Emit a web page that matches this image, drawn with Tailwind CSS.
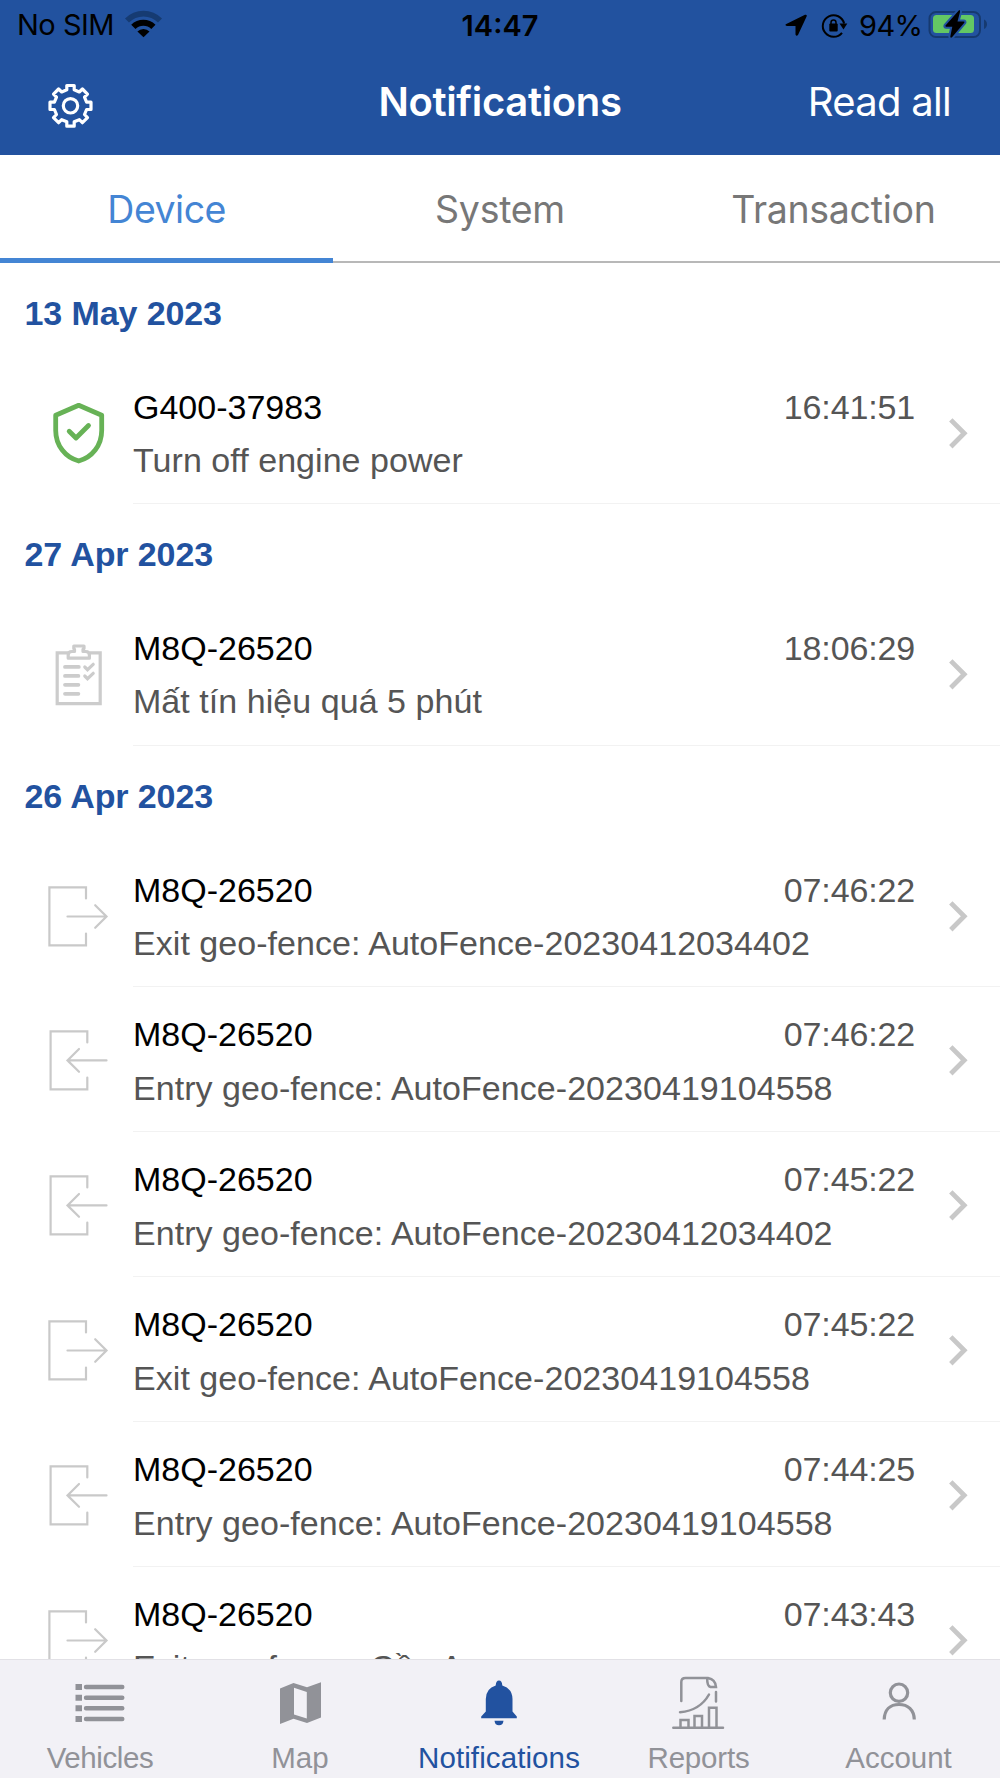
<!DOCTYPE html>
<html lang="en">
<head>
<meta charset="utf-8">
<title>Notifications</title>
<script src="https://cdn.jsdelivr.net/npm/@tailwindcss/browser@4"></script>
</head>
<body class="bg-white">
<svg class="hidden">
  <symbol id="shield" viewBox="0 0 133 145"><g fill="none" stroke="#67b256" stroke-width="4.8" stroke-linejoin="round"><path d="M78.7 45.3 101.7 55.3V70.5C101.7 85.5 92 97.5 78.7 101C65.400 97.5 55.700 85.5 55.700 70.5V55.3Z"/><path stroke-linecap="round" d="M69.200 71.200 76 78 88.500 65.500"/></g></symbol>
  <symbol id="clipboard" viewBox="0 0 133 145"><g fill="none" stroke="#ccc" stroke-width="3.200"><path d="M68 51.800H57.200V102.600H100.200V51.800H89.500"/><path stroke-linejoin="round" d="M68.200 57.200V54Q68.200 50.500 72 50.500H74.500V48.500L73.800 47.500V45H84V47.500L83 48.500V50.500H85.500Q89.400 50.500 89.400 54V57.200Z"/><path stroke-width="3.800" stroke-linecap="round" d="M65 65.900H78.800M65 74.900H78.400M65 83.800H78.400M65 92.800H78.400"/><path stroke-linecap="round" d="M84.800 66 87.500 68.700 93.200 63.300M84.800 75 87.500 77.700 93.200 72.300"/></g></symbol>
  <symbol id="exit" viewBox="0 0 133 145"><path fill="none" stroke="#c9c9c9" stroke-width="2.200" stroke-linecap="round" d="M86 55.500V44.300H49.400V102.300H86V90.500M67.500 73.500H106M95.200 62.200 106.500 73.500 95.200 84.800"/></symbol>
  <symbol id="entry" viewBox="0 0 133 145"><path fill="none" stroke="#c9c9c9" stroke-width="2.200" stroke-linecap="round" d="M87.300 55.500V44.400H50.600V102.300H87.300V90.500M67.500 73.400H106.500M79 62 67.500 73.400 79 84.800"/></symbol>
  <symbol id="chevron" viewBox="0 0 85 145"><path fill="none" stroke="#c8c8c8" stroke-width="4.800" d="M35.800 59.900 49.200 73.300 35.800 86.700"/></symbol>
</svg>
<div class="flex h-[1778px] w-[1000px] flex-col overflow-hidden bg-white font-['Liberation_Sans',Arial,sans-serif]">
  <header class="flex h-[155px] shrink-0 flex-col bg-[#22529f] font-[Inter,sans-serif]">
    <div class="grid h-[50px] grid-cols-3 items-center text-[29px] leading-[52px] text-black">
      <div class="flex h-[50px] items-center pl-[17px]">
        <span class="w-[108px] whitespace-nowrap tracking-[-0.5px]">No SIM</span>
        <svg width="37" height="50" viewBox="125 0 37 50"><path d="M125 18.500A26 26 0 0 1 162 18.500L158 22.500A20.500 20.500 0 0 0 129 22.500Z" fill="#163b72"/><path d="M131.200 24.700A17.300 17.300 0 0 1 155.500 24.700L151.300 28.900A11.500 11.500 0 0 0 135.500 28.900Z"/><path d="M137.400 31.500A8.500 8.500 0 0 1 149.500 31.500L143.500 37.300Z"/></svg>
      </div>
      <div class="-mt-px h-[50px] text-center font-semibold">14:47</div>
      <div class="flex h-[50px] justify-end">
        <svg width="65" height="50" viewBox="785 0 65 50"><path d="M785.800 24.300 805 14.800Q807.300 14.300 806.600 16.500L798 35Q796.300 36.800 795.500 34.500V25.900H787Q784.700 25.800 785.800 24.300Z"/><path d="M842 32.800A10.800 10.800 0 1 1 844.100 23.500" fill="none" stroke="#000" stroke-width="2"/><path d="M839.500 23.500H847.300L843.500 29.500Z"/><rect x="829.300" y="23.500" width="8.400" height="7.900" rx="1"/><path d="M831 24V22.500A2.500 2.500 0 0 1 836 22.500V24" fill="none" stroke="#000" stroke-width="1.500"/></svg>
        <span class="w-[78px] whitespace-nowrap pl-[9px] tracking-[-0.6px]">94%</span>
        <svg class="mr-[12px]" width="60" height="50" viewBox="928 0 60 50"><rect x="929.500" y="12" width="50.500" height="25" rx="6.500" fill="none" stroke="#163a70" stroke-width="2"/><path d="M984 19.500Q987 21 987 24.200T984 29Z" fill="#163a70"/><rect x="933" y="15" width="41" height="18" rx="3.500" fill="#63c764"/><path d="M959.200 10 945.500 25.600Q945 26.700 946.200 26.700H952.300L950.300 36.500Q950.500 38.500 952 37.300L964.300 22.700Q965 21.500 963.500 21.500H957.500L960 12Q960.300 10 959.200 10Z" fill="#000" stroke="#22529f" stroke-width="4" paint-order="stroke"/></svg>
      </div>
    </div>
    <div class="grid h-[104px] grid-cols-3 text-[40px] leading-[103px] text-white">
      <svg width="140" height="104" viewBox="0 50 140 104" fill="none" stroke="#fff" stroke-width="3.200"><circle cx="70.500" cy="105.800" r="7.200"/><path stroke-linejoin="round" d="M66.800 85.500H74.200V89.800L79.300 92L82.400 89L87.500 94.100L84.500 97.200L86.600 102.200H91V109.500H86.600L84.500 114.500L87.500 117.600L82.400 122.700L79.300 119.700L74.200 121.800V126.200H66.800V121.800L61.700 119.700L58.600 122.700L53.500 117.600L56.500 114.500L54.400 109.500H50V102.200H54.400L56.500 97.200L53.500 94.100L58.600 89L61.700 92L66.800 89.800Z"/></svg>
      <h1 class="-mx-5 text-center font-semibold tracking-[-0.35px]">Notifications</h1>
      <div class="pr-[49px] text-right tracking-[-0.7px]">Read all</div>
    </div>
  </header>
  <nav class="grid h-[108px] shrink-0 grid-cols-3 border-b-2 border-[#b8b8b8] text-center font-[Inter,sans-serif] text-[37.5px] leading-[110px] text-[#777]">
    <div class="h-[108px] border-b-[5px] border-[#4485d4] tracking-[-0.5px] text-[#4485d4]">Device</div>
    <div class="tracking-[-0.3px]">System</div>
    <div class="tracking-[-0.3px]">Transaction</div>
  </nav>
  <main id="list" class="min-h-0 flex-1 overflow-hidden"></main>
  <footer class="grid h-[119px] shrink-0 grid-cols-5 border-t border-[#e2e1e6] bg-[#f2f1f6] text-center text-[29.5px] leading-[36px] text-[#919298]">
    <div><svg class="block" width="200" height="80" viewBox="0 1660 200 80" fill="currentColor"><path d="M75.500 1684h6.500v6h-6.500zM75.500 1694.700h6.500v6h-6.500zM75.500 1705.300h6.500v6h-6.500zM75.500 1716h6.500v6h-6.500z"/><path stroke="currentColor" stroke-width="4.400" stroke-linecap="round" d="M86 1687H122.300M86 1697.700H122.300M86 1708.300H122.300M86 1719H122.300"/></svg><span class="tracking-[-0.4px]">Vehicles</span></div>
    <div><svg class="block" width="200" height="80" viewBox="200 1660 200 80" fill="currentColor"><path fill-rule="evenodd" d="M280 1688.500 293.500 1683 307 1687.300 321 1682.200V1717.500L307 1723 293.500 1718.800 280 1724ZM294 1687.800V1714.500L306.800 1718.500V1692Z"/></svg>Map</div>
    <div class="text-[#2252a0]"><svg class="block" width="200" height="80" viewBox="400 1660 200 80" fill="currentColor"><path d="M499 1680.500Q502 1680.500 502.300 1685.600Q512.300 1688.500 512.500 1699V1711.500L516.800 1716.500V1718.300H481.200V1716.500L485.800 1711.500V1699Q486 1688.500 495.700 1685.600Q496 1680.500 499 1680.500ZM494.500 1720.700H503.500Q503 1725.300 499 1725.300T494.500 1720.700Z"/></svg><span class="-ml-[2px] tracking-[0.1px]">Notifications</span></div>
    <div><svg class="block" width="200" height="80" viewBox="600 1660 200 80" fill="none" stroke="currentColor" stroke-width="2.500" stroke-linecap="round"><path d="M681.300 1701V1682Q681.300 1678 685.500 1678H708Q715.500 1679.500 716 1687H710.500Q707 1686 707.200 1678.500M716 1692V1701.500M680 1712.200Q700 1710.500 709 1694.500M673.300 1727.800H723M680.500 1727V1720H688.500V1727M694.500 1727V1716H702V1727M709 1727V1707.800H716.500V1727"/></svg><span class="-ml-[3px] tracking-[-0.2px]">Reports</span></div>
    <div><svg class="block" width="200" height="80" viewBox="800 1660 200 80" fill="none" stroke="currentColor" stroke-width="3.200"><circle cx="899" cy="1692.700" r="8.700"/><path d="M884.200 1719.500C884.500 1710 890 1704.500 899 1704.500S914 1710 914.300 1719.500"/></svg><span class="-ml-[3px]">Account</span></div>
  </footer>
</div>
<script>
const groups = [
  ["13 May 2023", [["shield", "G400-37983", "16:41:51", "Turn off engine power"]]],
  ["27 Apr 2023", [["clipboard", "M8Q-26520", "18:06:29", "Mất tín hiệu quá 5 phút"]]],
  ["26 Apr 2023", [
    ["exit", "M8Q-26520", "07:46:22", "Exit geo-fence: AutoFence-20230412034402"],
    ["entry", "M8Q-26520", "07:46:22", "Entry geo-fence: AutoFence-20230419104558"],
    ["entry", "M8Q-26520", "07:45:22", "Entry geo-fence: AutoFence-20230412034402"],
    ["exit", "M8Q-26520", "07:45:22", "Exit geo-fence: AutoFence-20230419104558"],
    ["entry", "M8Q-26520", "07:44:25", "Entry geo-fence: AutoFence-20230419104558"],
    ["exit", "M8Q-26520", "07:43:43", "Exit geo-fence: Cần A"]
  ]]
];
document.getElementById("list").innerHTML = groups.map(([date, items]) => `
  <h2 class="h-[96.6px] pl-[24.5px] pt-[30px] text-[34px] leading-[40px] font-bold tracking-[-0.1px] text-[#2252a0]">${date}</h2>
  ${items.map(([icon, name, time, text]) => `
  <div class="flex h-[144.9px]">
    <svg class="h-[145px] w-[133px] shrink-0"><use href="#${icon}"/></svg>
    <div class="flex flex-1 border-b border-[#f2f2f2]">
      <div class="w-[782px] pt-[27px] text-[34px] leading-[40px] text-[#555]">
        <div class="flex justify-between"><span class="text-black">${name}</span><span class="tracking-[-0.15px]">${time}</span></div>
        <p class="mt-[13.4px] whitespace-nowrap tracking-[0.05px]">${text}</p>
      </div>
      <svg class="h-[145px] w-[85px] shrink-0"><use href="#chevron"/></svg>
    </div>
  </div>`).join("")}`).join("");
</script>
</body>
</html>
